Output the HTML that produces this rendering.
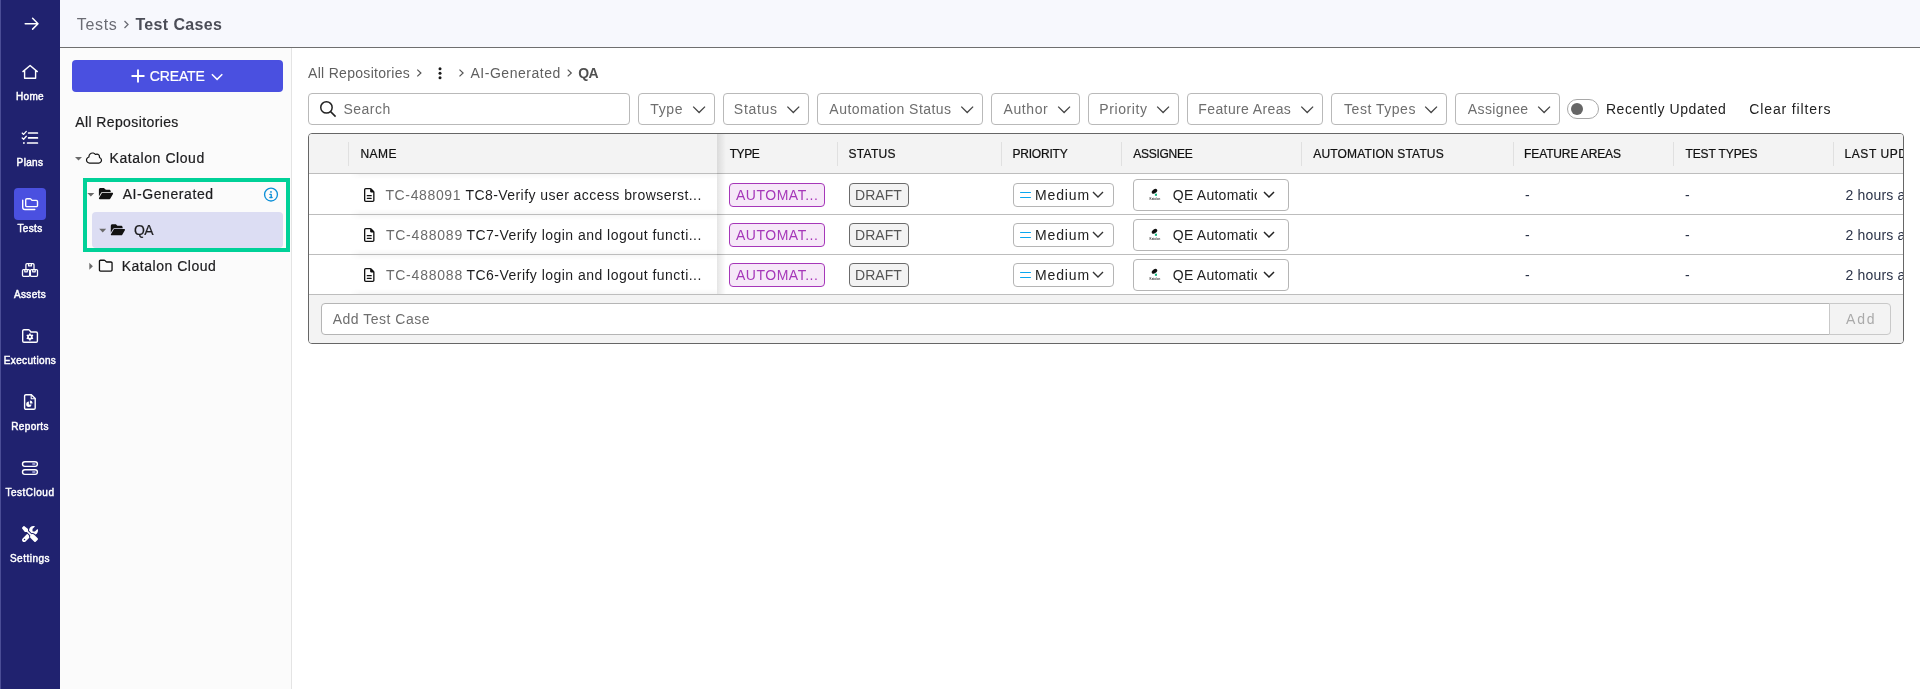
<!DOCTYPE html>
<html lang="en">
<head>
<meta charset="utf-8">
<title>Test Cases</title>
<style>
*{box-sizing:border-box;margin:0;padding:0}
html,body{width:1920px;height:689px;overflow:hidden;background:#fff}
body{font-family:"Liberation Sans",Arial,sans-serif;font-size:14px;color:#1d1d1f;position:relative;will-change:transform}
.abs{position:absolute}
.t{position:absolute;white-space:nowrap;line-height:1}
svg{position:absolute;overflow:visible}

/* sidebar */
#side{position:absolute;left:0;top:0;width:60px;height:689px;background:#20226f}
#side .stripe{position:absolute;left:0;top:0;width:1px;height:689px;background:#4b4d96}
.nav{position:absolute;left:0;width:60px;text-align:center;color:#fff;font-size:10px;font-weight:400;-webkit-text-stroke:.45px #fff;letter-spacing:.35px;line-height:1;white-space:nowrap}
#navsel{position:absolute;left:14px;top:188px;width:32px;height:32px;border-radius:4px;background:#4a50e0}

/* header */
#hdr{position:absolute;left:60px;top:0;width:1860px;height:47px;background:#f7f8fd}
#hdrline{position:absolute;left:60px;top:47px;width:1860px;height:1px;background:#6f6f6f}
#hdrshadow{position:absolute;left:60px;top:48px;width:1860px;height:2px;background:linear-gradient(#d9d9d9,#fff)}

/* tree */
#tree{position:absolute;left:60px;top:48px;width:231px;height:641px;background:#fbfbfb}
#treeline{position:absolute;left:291px;top:48px;width:1px;height:641px;background:#e4e4e4}
#create{position:absolute;left:72px;top:60px;width:211px;height:32px;border-radius:4px;background:#4a50e0}
#hl{position:absolute;left:83px;top:178px;width:207px;height:74px;border:4px solid #00d198}
#selrow{position:absolute;left:92px;top:212px;width:191px;height:36px;border-radius:4px;background:#dcddf3}

/* filters */
.fbox{position:absolute;top:93px;height:32px;border:1px solid #b9b9b9;border-radius:4px;background:#fff}
.ftxt{position:absolute;top:102px;font-size:14px;line-height:1;color:#6e6e6e;white-space:nowrap}

/* table */
#tbl{position:absolute;left:308px;top:133px;width:1596px;height:211px;border:1px solid #666;border-radius:4px;background:#fff;overflow:hidden}
.th{position:absolute;top:148px;font-size:12px;font-weight:400;line-height:1;color:#111;white-space:nowrap;letter-spacing:.2px;-webkit-text-stroke:.22px #111}
.sep{position:absolute;top:142px;width:1px;height:24px;background:#e0e0e0}
.hline{position:absolute;left:309px;width:1594px;height:1px;background:#bdbdbd}
.cell{position:absolute;font-size:14px;line-height:1;white-space:nowrap}
/*FIT*/
#h_tests{letter-spacing:0.70px !important;left:76.72px !important}
#h_tc{letter-spacing:0.37px !important;left:135.39px !important}
#c_create{letter-spacing:-0.15px !important;left:149.85px !important}
#t_allrepo{letter-spacing:0.39px !important;left:75.25px !important}
#t_kc1{letter-spacing:0.56px !important;left:109.56px !important}
#t_aigen{letter-spacing:0.57px !important;left:122.71px !important}
#t_qa{letter-spacing:-0.80px !important;left:134.10px !important}
#t_kc2{letter-spacing:0.51px !important;left:121.70px !important}
#b_all{letter-spacing:0.30px !important;left:308.03px !important}
#b_ai{letter-spacing:0.53px !important;left:470.48px !important}
#b_qa{letter-spacing:-0.61px !important;left:578.13px !important}
#f_search{letter-spacing:0.46px !important;left:343.57px !important}
#f_type{letter-spacing:0.66px !important;left:650.21px !important}
#f_status{letter-spacing:0.72px !important;left:733.83px !important}
#f_auto{letter-spacing:0.46px !important;left:829.35px !important}
#f_author{letter-spacing:0.59px !important;left:1003.48px !important}
#f_prio{letter-spacing:0.57px !important;left:1099.36px !important}
#f_fa{letter-spacing:0.38px !important;left:1198.36px !important}
#f_tt{letter-spacing:0.52px !important;left:1344.08px !important}
#f_asg{letter-spacing:0.39px !important;left:1467.78px !important}
#f_recent{letter-spacing:0.58px !important;left:1605.90px !important}
#f_clear{letter-spacing:0.86px !important;left:1749.31px !important}
#th0{letter-spacing:0.46px !important;left:360.43px !important}
#th1{letter-spacing:-0.44px !important;left:729.70px !important}
#th2{letter-spacing:0.28px !important;left:848.56px !important}
#th3{letter-spacing:-0.20px !important;left:1012.43px !important}
#th4{letter-spacing:-0.29px !important;left:1133.37px !important}
#th5{letter-spacing:0.16px !important;left:1313.37px !important}
#th6{letter-spacing:-0.14px !important;left:1524.12px !important}
#th7{letter-spacing:-0.10px !important;left:1685.44px !important}
#r0_tc{letter-spacing:0.64px !important;left:385.41px !important}
#r0_nm{letter-spacing:0.44px !important;left:465.41px !important}
#r0_au{letter-spacing:0.51px !important;left:736.03px !important}
#r0_dr{letter-spacing:-0.00px !important;left:855.12px !important}
#r0_md{letter-spacing:0.84px !important;left:1035.12px !important}
#ft_add{letter-spacing:0.49px !important;left:332.78px !important}
#ft_btn{letter-spacing:1.79px !important;left:1846.03px !important}
#r1_tc{letter-spacing:0.79px !important;left:385.88px !important}
#r1_nm{letter-spacing:0.47px !important;left:466.51px !important}
#r1_au{letter-spacing:0.51px !important;left:736.03px !important}
#r1_dr{letter-spacing:-0.00px !important;left:855.12px !important}
#r1_md{letter-spacing:0.84px !important;left:1035.12px !important}
#r2_tc{letter-spacing:0.79px !important;left:385.88px !important}
#r2_nm{letter-spacing:0.47px !important;left:466.51px !important}
#r2_au{letter-spacing:0.51px !important;left:736.03px !important}
#r2_dr{letter-spacing:-0.00px !important;left:855.12px !important}
#r2_md{letter-spacing:0.84px !important;left:1035.12px !important}
/*ENDFIT*/
#t_allrepo,#t_kc1,#t_aigen,#t_qa,#t_kc2{-webkit-text-stroke:.2px #1d1d1f}
#c_create{-webkit-text-stroke:.2px #fff}
</style>
</head>
<body>

<!-- HEADER -->
<div id="hdr"></div>
<div id="hdrline"></div>
<div class="t" id="h_tests" style="left:76px;top:17px;font-size:16px;color:#6b6c74">Tests</div>
<svg style="left:123px;top:20px" width="7" height="9" viewBox="0 0 7 9"><path d="M1.5 1 L5 4.5 L1.5 8" fill="none" stroke="#6b6c74" stroke-width="1.3"/></svg>
<div class="t" id="h_tc" style="left:135px;top:17px;font-size:16px;font-weight:700;color:#4b4d57">Test Cases</div>

<!-- TREE PANEL -->
<div id="tree"></div>
<div id="treeline"></div>
<div id="create"></div>
<div class="t" id="c_create" style="left:150px;top:69px;font-size:14px;color:#fff;letter-spacing:.3px">CREATE</div>

<div class="t" id="t_allrepo" style="left:75px;top:115px;font-size:14px;color:#1d1d1f">All Repositories</div>
<div class="t" id="t_kc1" style="left:110px;top:151px;font-size:14px">Katalon Cloud</div>
<div id="selrow"></div>
<div class="t" id="t_aigen" style="left:122px;top:187px;font-size:14px">AI-Generated</div>
<div class="t" id="t_qa" style="left:134px;top:223px;font-size:14px">QA</div>
<div class="t" id="t_kc2" style="left:122px;top:259px;font-size:14px">Katalon Cloud</div>
<div id="hl"></div>

<!-- SIDEBAR -->
<div id="side"><div class="stripe"></div></div>
<div id="navsel"></div>
<div class="nav" id="n_home" style="top:92px">Home</div>
<div class="nav" id="n_plans" style="top:158px">Plans</div>
<div class="nav" id="n_tests" style="top:224px">Tests</div>
<div class="nav" id="n_assets" style="top:290px">Assets</div>
<div class="nav" id="n_exec" style="top:356px">Executions</div>
<div class="nav" id="n_reports" style="top:422px">Reports</div>
<div class="nav" id="n_tc" style="top:488px;letter-spacing:.5px">TestCloud</div>
<div class="nav" id="n_set" style="top:554px;letter-spacing:.5px">Settings</div>

<svg id="icons" style="left:0;top:0;pointer-events:none;z-index:10" width="1920" height="689" viewBox="0 0 1920 689">
<g fill="none" stroke="#fff" stroke-width="1.4" stroke-linecap="round" stroke-linejoin="round">
<path d="M25.2 23.7 H38 M32.6 18.3 L38 23.7 L32.6 29.1" stroke-width="1.5"/>
<path d="M22.9 71.6 L30.1 65.5 L37.3 71.6 M24.6 70.4 V78.3 H35.6 V70.4"/>
<path d="M28.6 133 H37.4 M28.6 137.9 H37.4 M27.6 143 H37.4" stroke-width="1.7"/>
<path d="M22.2 133.1 L23.6 134.4 L26.3 131.4 M22.2 138 L23.6 139.3 L26.3 136.3" stroke-width="1.3"/>
<circle cx="23.9" cy="143" r="0.9" fill="#fff" stroke="none"/>
<path d="M25.7 205.4 V199.9 a1.2 1.2 0 0 1 1.2 -1.2 H30 a1.2 1.2 0 0 1 .9 .4 L32 200.4 H36.3 a1.2 1.2 0 0 1 1.2 1.2 V205.4 a1.2 1.2 0 0 1 -1.2 1.2 H26.9 a1.2 1.2 0 0 1 -1.2 -1.2 Z"/>
<path d="M22.7 200.3 V207.3 a2.2 2.2 0 0 0 2.2 2.2 H34.8"/>
<path d="M25.9 269 V264.7 a1 1 0 0 1 1 -1 H33 a1 1 0 0 1 1 1 V269 M28.6 263.7 V265.9 H31.4 V263.7" stroke-width="1.3"/>
<rect x="22.5" y="269.6" width="7.1" height="6.7" rx="1" stroke-width="1.3"/>
<rect x="30.4" y="269.6" width="7.1" height="6.7" rx="1" stroke-width="1.3"/>
<path d="M24.8 269.6 V271.8 H27.3 V269.6 M32.7 269.6 V271.8 H35.2 V269.6" stroke-width="1.2"/>
<path d="M22.7 340.9 V331 a1.3 1.3 0 0 1 1.3 -1.3 H28.4 a1.3 1.3 0 0 1 1 .45 L30.9 332 H36.1 a1.3 1.3 0 0 1 1.3 1.3 V340.9 a1.3 1.3 0 0 1 -1.3 1.3 H24 a1.3 1.3 0 0 1 -1.3 -1.3 Z"/>
<circle cx="29.9" cy="336.9" r="1.9" stroke-width="1.7"/>
<path d="M29.9 333.9 V334.5 M29.9 339.3 V339.9 M27.3 335.4 L27.8 335.7 M32 338.1 L32.5 338.4 M27.3 338.4 L27.8 338.1 M32 335.7 L32.5 335.4" stroke-width="1.5"/>
<path d="M24.6 396 a1.3 1.3 0 0 1 1.3 -1.3 H31.4 L35.2 398.5 V408 a1.3 1.3 0 0 1 -1.3 1.3 H25.9 a1.3 1.3 0 0 1 -1.3 -1.3 Z"/>
<path d="M31.2 394.9 V398.7 H35" stroke-width="1.1"/>
<path d="M28.9 401.6 A2.7 2.7 0 1 0 31.6 404.5 H28.9 Z" fill="#fff" stroke="none"/>
<path d="M29.9 400.6 A2.9 2.9 0 0 1 32.6 403.4 H29.9 Z" fill="#fff" stroke="none"/>
<rect x="22.5" y="461.7" width="14.9" height="4.7" rx="2.35"/>
<rect x="22.5" y="469.7" width="14.9" height="4.7" rx="2.35"/>
<path d="M32.3 464.05 H35.4 M32.3 472.05 H35.4" stroke="#8a8dc9" stroke-width="2.2" stroke-linecap="butt"/>
</g>
<g transform="translate(22 526) scale(0.03125)"><path d="M78.6 5C69.1-2.4 55.6-1.5 47 7L7 47c-8.500 8.500-9.400 22-2.100 31.600l80 104c4.500 5.900 11.600 9.400 19 9.400h54.100l109 109c-14.700 29-10 65.400 14.300 89.600l112 112c12.500 12.500 32.800 12.500 45.300 0l64-64c12.500-12.500 12.500-32.800 0-45.300l-112-112c-24.200-24.200-60.600-29-89.600-14.300l-109-109V104c0-7.500-3.500-14.500-9.400-19L78.600 5zM19.900 396.100C7.200 408.800 0 426.100 0 444.100C0 481.600 30.400 512 67.900 512c18 0 35.300-7.200 48-19.900L233.700 374.300c-7.800-20.900-9-43.600-3.600-65.100l-61.700-61.700L19.900 396.100zM512 144c0-10.500-1.100-20.700-3.200-30.500c-2.400-11.200-16.100-14.100-24.200-6l-63.900 63.900c-3 3-7.100 4.700-11.300 4.700H352c-8.800 0-16-7.200-16-16V102.600c0-4.200 1.700-8.300 4.700-11.300l63.900-63.900c8.100-8.100 5.200-21.800-6-24.200C388.700 1.100 378.500 0 368 0C288.500 0 224 64.500 224 144l0 .8 85.300 85.300c36-9.100 75.800 .5 104 28.700L429 274.500c49-23 83-72.800 83-130.500zM56 432a24 24 0 1 1 48 0 24 24 0 1 1 -48 0z" fill="#fff"/></g>
<path d="M75 156.9 H82 L78.5 160.5 Z" fill="#6a6a6a"/>
<path d="M87.3 192.9 H94.3 L90.8 196.5 Z" fill="#6a6a6a"/>
<path d="M99.2 228.8 H106.2 L102.7 232.4 Z" fill="#6a6a6a"/>
<path d="M89.3 262.8 V269.8 L92.9 266.3 Z" fill="#6a6a6a"/>
<g transform="translate(85.9 151.59) scale(0.02531)"><path d="M354.900 121.700c13.800 16 36.500 21.100 55.900 12.500c8.900-3.900 18.700-6.200 29.200-6.200c39.800 0 72 32.200 72 72c0 4-.3 7.900-.9 11.700c-3.500 21.600 8.100 42.900 28.100 51.700C570.400 276.900 592 308 592 344c0 46.800-36.600 85.200-82.800 87.800c-.6 0-1.300 .1-1.900 .2H504 144c-53 0-96-43-96-96c0-41.700 26.600-77.300 64-90.500c19.200-6.800 32-24.900 32-45.300l0-.2v0 0c0-66.300 53.700-120 120-120c36.300 0 68.800 16.100 90.900 41.700zM512 480v-.2c71.400-4.100 128-63.300 128-135.800c0-55.700-33.500-103.700-81.500-124.700c1-6.300 1.500-12.800 1.500-19.300c0-66.300-53.700-120-120-120c-17.400 0-33.800 3.700-48.700 10.300C360.400 52.600 314.900 32 264 32C171.200 32 96 107.200 96 200l0 .2C40.100 220 0 273.300 0 336c0 79.500 64.500 144 144 144H464h40 8z" fill="#151515"/></g>
<g transform="translate(98.9 187.31) scale(0.02465)"><path d="M88.7 223.8L0 375.800V96C0 60.700 28.700 32 64 32H181.500c17 0 33.300 6.700 45.300 18.700l26.500 26.500c12 12 28.300 18.700 45.300 18.700H416c35.300 0 64 28.700 64 64v32H144c-22.800 0-43.800 12.100-55.300 31.800zm27.600 16.100C122.100 230 132.600 224 144 224H544c11.500 0 22 6.100 27.700 16.100s5.700 22.200-.1 32.100l-112 192C453.900 474 443.400 480 432 480H32c-11.500 0-22-6.100-27.700-16.100s-5.700-22.200 .1-32.100l112-192z" fill="#111"/></g>
<g transform="translate(110.8 223.51) scale(0.02465)"><path d="M88.7 223.8L0 375.800V96C0 60.700 28.700 32 64 32H181.500c17 0 33.300 6.700 45.300 18.700l26.500 26.500c12 12 28.300 18.700 45.300 18.700H416c35.300 0 64 28.700 64 64v32H144c-22.800 0-43.800 12.100-55.300 31.800zm27.600 16.100C122.100 230 132.600 224 144 224H544c11.500 0 22 6.100 27.700 16.100s5.700 22.200-.1 32.100l-112 192C453.900 474 443.400 480 432 480H32c-11.500 0-22-6.100-27.700-16.100s-5.700-22.200 .1-32.100l112-192z" fill="#111"/></g>
<g transform="translate(98.8 258.73) scale(0.02715)"><path d="M0 96C0 60.700 28.700 32 64 32H196.100c19.100 0 37.400 7.600 50.900 21.100L289.900 96H448c35.300 0 64 28.700 64 64V416c0 35.300-28.700 64-64 64H64c-35.300 0-64-28.700-64-64V96zM64 80c-8.800 0-16 7.200-16 16V416c0 8.800 7.200 16 16 16H448c8.800 0 16-7.200 16-16V160c0-8.800-7.200-16-16-16H286.600c-10.600 0-20.800-4.200-28.300-11.700L213.100 87c-4.500-4.500-10.600-7-17-7H64z" fill="#111"/></g>
<g transform="translate(263.9 187.5) scale(0.02773)"><path d="M256 48a208 208 0 1 1 0 416 208 208 0 1 1 0-416zm0 464A256 256 0 1 0 256 0a256 256 0 1 0 0 512zM216 336c-13.300 0-24 10.700-24 24s10.700 24 24 24h80c13.300 0 24-10.700 24-24s-10.700-24-24-24h-8V248c0-13.300-10.700-24-24-24H216c-13.300 0-24 10.700-24 24s10.700 24 24 24h24v64H216zm40-144a32 32 0 1 0 0-64 32 32 0 1 0 0 64z" fill="#0b8fd7"/></g>
<path d="M131.5 76 H144.5 M138 69.5 V82.5" stroke="#fff" stroke-width="1.9" fill="none"/>
<path d="M211.9 74.2 L217.1 79.4 L222.3 74.2" stroke="#fff" stroke-width="1.5" fill="none"/>
<path d="M417.3 69.6 L420.90000000000003 73 L417.3 76.4" stroke="#555" stroke-width="1.2" fill="none"/>
<path d="M459.5 69.6 L463.1 73 L459.5 76.4" stroke="#555" stroke-width="1.2" fill="none"/>
<path d="M567.7 69.6 L571.3000000000001 73 L567.7 76.4" stroke="#555" stroke-width="1.2" fill="none"/>
<circle cx="440" cy="68.8" r="1.5" fill="#1a1a1a"/>
<circle cx="440" cy="73.3" r="1.5" fill="#1a1a1a"/>
<circle cx="440" cy="77.8" r="1.5" fill="#1a1a1a"/>
<circle cx="326.45" cy="107.4" r="5.7" stroke="#222" stroke-width="1.5" fill="none"/><path d="M330.6 111.6 L335.6 116.6" stroke="#222" stroke-width="1.5" fill="none"/>
<path d="M693.2 106.6 L699.1 112.5 L705.0 106.6" stroke="#444" stroke-width="1.3" fill="none"/>
<path d="M787.4 106.6 L793.3 112.5 L799.1999999999999 106.6" stroke="#444" stroke-width="1.3" fill="none"/>
<path d="M961.3 106.6 L967.1999999999999 112.5 L973.0999999999999 106.6" stroke="#444" stroke-width="1.3" fill="none"/>
<path d="M1058.2 106.6 L1064.1000000000001 112.5 L1070.0 106.6" stroke="#444" stroke-width="1.3" fill="none"/>
<path d="M1157.2 106.6 L1163.1000000000001 112.5 L1169.0 106.6" stroke="#444" stroke-width="1.3" fill="none"/>
<path d="M1301.3 106.6 L1307.2 112.5 L1313.1 106.6" stroke="#444" stroke-width="1.3" fill="none"/>
<path d="M1425.2 106.6 L1431.1000000000001 112.5 L1437.0 106.6" stroke="#444" stroke-width="1.3" fill="none"/>
<path d="M1538.2 106.6 L1544.1000000000001 112.5 L1550.0 106.6" stroke="#444" stroke-width="1.3" fill="none"/>
<ellipse cx="1154.5" cy="191.3" rx="3.1" ry="1.9" transform="rotate(-38 1154.5 191.3)" fill="#111"/>
<rect x="1154.9" y="193.7" width="2.1" height="2.1" fill="#16b77f"/>
<text x="1154.9" y="200.1" font-size="2.9" text-anchor="middle" fill="#444" font-family="Liberation Sans, sans-serif" font-weight="700">Katalon</text>
<ellipse cx="1154.5" cy="231.3" rx="3.1" ry="1.9" transform="rotate(-38 1154.5 231.3)" fill="#111"/>
<rect x="1154.9" y="233.7" width="2.1" height="2.1" fill="#16b77f"/>
<text x="1154.9" y="240.1" font-size="2.9" text-anchor="middle" fill="#444" font-family="Liberation Sans, sans-serif" font-weight="700">Katalon</text>
<ellipse cx="1154.5" cy="271.3" rx="3.1" ry="1.9" transform="rotate(-38 1154.5 271.3)" fill="#111"/>
<rect x="1154.9" y="273.7" width="2.1" height="2.1" fill="#16b77f"/>
<text x="1154.9" y="280.1" font-size="2.9" text-anchor="middle" fill="#444" font-family="Liberation Sans, sans-serif" font-weight="700">Katalon</text>
</svg>
<!-- BREADCRUMB -->
<div class="t" id="b_all" style="left:308px;top:66px;font-size:14px;color:#5f5f5f">All Repositories</div>
<div class="t" id="b_ai" style="left:471px;top:66px;font-size:14px;color:#5f5f5f">AI-Generated</div>
<div class="t" id="b_qa" style="left:579px;top:66px;font-size:14px;font-weight:700;color:#505050">QA</div>

<!-- FILTERS -->
<div class="fbox" style="left:308px;width:322px"></div>
<div class="ftxt" id="f_search" style="left:344px">Search</div>
<div class="fbox" style="left:638px;width:77px"></div><div class="ftxt" id="f_type" style="left:650px">Type</div>
<div class="fbox" style="left:723px;width:86px"></div><div class="ftxt" id="f_status" style="left:735px">Status</div>
<div class="fbox" style="left:817px;width:166px"></div><div class="ftxt" id="f_auto" style="left:829px">Automation Status</div>
<div class="fbox" style="left:991px;width:89px"></div><div class="ftxt" id="f_author" style="left:1003px">Author</div>
<div class="fbox" style="left:1088px;width:91px"></div><div class="ftxt" id="f_prio" style="left:1100px">Priority</div>
<div class="fbox" style="left:1187px;width:136px"></div><div class="ftxt" id="f_fa" style="left:1199px">Feature Areas</div>
<div class="fbox" style="left:1331px;width:116px"></div><div class="ftxt" id="f_tt" style="left:1343px">Test Types</div>
<div class="fbox" style="left:1455px;width:105px"></div><div class="ftxt" id="f_asg" style="left:1467px">Assignee</div>
<div class="abs" style="left:1567px;top:99px;width:32px;height:20px;border:1px solid #a8a8a8;border-radius:10px;background:#fff"></div>
<div class="abs" style="left:1571px;top:103px;width:12px;height:12px;border-radius:6px;background:#666"></div>
<div class="ftxt" id="f_recent" style="left:1607px;color:#222">Recently Updated</div>
<div class="ftxt" id="f_clear" style="left:1750px;color:#222">Clear filters</div>

<!-- TABLE -->
<div id="tbl"></div>
<div class="abs" style="left:309px;top:134px;width:1594px;height:39px;background:#f3f3f3;border-radius:3px 3px 0 0"></div>
<div class="abs" style="left:309px;top:295px;width:1594px;height:48px;background:#f3f3f3;border-radius:0 0 3px 3px"></div>
<div class="hline" style="top:173px"></div>
<div class="hline" style="top:214px"></div>
<div class="hline" style="top:254px"></div>
<div class="hline" style="top:294px"></div>
<div class="abs" style="left:717px;top:134px;width:9px;height:160px;background:linear-gradient(90deg,rgba(0,0,0,.10),rgba(0,0,0,0))"></div>
<div class="abs" style="left:350px;top:174px;width:367px;height:5px;background:linear-gradient(rgba(0,0,0,.035),rgba(0,0,0,0));-webkit-mask-image:linear-gradient(90deg,transparent,#000 10px)"></div>
<div class="abs" style="left:350px;top:209px;width:367px;height:5px;background:linear-gradient(rgba(0,0,0,0),rgba(0,0,0,.035));-webkit-mask-image:linear-gradient(90deg,transparent,#000 10px)"></div>
<div class="abs" style="left:350px;top:215px;width:367px;height:5px;background:linear-gradient(rgba(0,0,0,.035),rgba(0,0,0,0));-webkit-mask-image:linear-gradient(90deg,transparent,#000 10px)"></div>
<div class="abs" style="left:350px;top:249px;width:367px;height:5px;background:linear-gradient(rgba(0,0,0,0),rgba(0,0,0,.035));-webkit-mask-image:linear-gradient(90deg,transparent,#000 10px)"></div>
<div class="abs" style="left:350px;top:255px;width:367px;height:5px;background:linear-gradient(rgba(0,0,0,.035),rgba(0,0,0,0));-webkit-mask-image:linear-gradient(90deg,transparent,#000 10px)"></div>
<div class="abs" style="left:350px;top:289px;width:367px;height:5px;background:linear-gradient(rgba(0,0,0,0),rgba(0,0,0,.035));-webkit-mask-image:linear-gradient(90deg,transparent,#000 10px)"></div>
<div class="sep" style="left:348px"></div>
<div class="sep" style="left:837px"></div>
<div class="sep" style="left:1001px"></div>
<div class="sep" style="left:1121px"></div>
<div class="sep" style="left:1301px"></div>
<div class="sep" style="left:1513px"></div>
<div class="sep" style="left:1673px"></div>
<div class="sep" style="left:1833px"></div>
<div class="th" id="th0" style="left:361px">NAME</div>
<div class="th" id="th1" style="left:729px">TYPE</div>
<div class="th" id="th2" style="left:849px">STATUS</div>
<div class="th" id="th3" style="left:1013px">PRIORITY</div>
<div class="th" id="th4" style="left:1133px">ASSIGNEE</div>
<div class="th" id="th5" style="left:1313px">AUTOMATION STATUS</div>
<div class="th" id="th6" style="left:1525px">FEATURE AREAS</div>
<div class="th" id="th7" style="left:1685px">TEST TYPES</div>
<div class="abs" style="left:1834px;top:134px;width:69px;height:39px;overflow:hidden"><div class="th" id="th8" style="left:10.6px;top:14px;letter-spacing:.55px">LAST UPDATED</div></div>
<svg style="left:364px;top:188.0px" width="10.5" height="14" viewBox="0 0 384 512"><path d="M64 464c-8.800 0-16-7.200-16-16V64c0-8.800 7.200-16 16-16h160v80c0 17.700 14.300 32 32 32h80v288c0 8.800-7.200 16-16 16H64zM64 0C28.700 0 0 28.700 0 64v384c0 35.300 28.700 64 64 64h256c35.300 0 64-28.700 64-64V154.500c0-17-6.700-33.300-18.700-45.300L274.700 18.700C262.700 6.700 246.500 0 229.500 0H64zm56 256c-13.300 0-24 10.700-24 24s10.700 24 24 24h144c13.300 0 24-10.700 24-24s-10.700-24-24-24H120zm0 96c-13.300 0-24 10.700-24 24s10.700 24 24 24h144c13.300 0 24-10.700 24-24s-10.700-24-24-24H120z" fill="#111"/></svg>
<div class="cell" id="r0_tc" style="left:385px;top:187.5px;color:#6a6a6a">TC-488091</div>
<div class="cell" id="r0_nm" style="left:465px;top:187.5px;color:#1d1d1f">TC8-Verify user access browserst...</div>
<div class="abs" style="left:729px;top:183.0px;width:96px;height:24px;border:1px solid #a637b9;border-radius:4px;background:#f6e8f8"></div>
<div class="cell" id="r0_au" style="left:736px;top:187.5px;color:#a637b9">AUTOMAT...</div>
<div class="abs" style="left:849px;top:183.0px;width:60px;height:24px;border:1px solid #6b6b6b;border-radius:4px;background:#f3f3f3"></div>
<div class="cell" id="r0_dr" style="left:856px;top:187.5px;color:#555">DRAFT</div>
<div class="abs" style="left:1013px;top:183.0px;width:101px;height:24px;border:1px solid #b5b5b5;border-radius:4px;background:#fff"></div>
<div class="abs" style="left:1020px;top:192px;width:11px;height:1px;background:#0aa7ef;border-radius:1px"></div>
<div class="abs" style="left:1020px;top:197px;width:11px;height:1px;background:#0aa7ef;border-radius:1px"></div>
<div class="cell" id="r0_md" style="left:1036px;top:187.5px;color:#222">Medium</div>
<svg style="left:1092px;top:191.0px" width="12" height="7" viewBox="0 0 12 7"><path d="M1 1 L6 6 L11 1" fill="none" stroke="#333" stroke-width="1.4"/></svg>
<div class="abs" style="left:1133px;top:179.0px;width:156px;height:32px;border:1px solid #b5b5b5;border-radius:4px;background:#fff"></div>
<div class="abs" style="left:1172px;top:184.5px;width:85px;height:20px;overflow:hidden"><div class="cell" id="r0_qe" style="left:.75px;top:3px;letter-spacing:.25px;color:#222">QE Automation</div></div>
<svg style="left:1263px;top:191.0px" width="12" height="7" viewBox="0 0 12 7"><path d="M1 1 L6 6 L11 1" fill="none" stroke="#222" stroke-width="1.5"/></svg>
<div class="cell" style="left:1525px;top:187.5px;color:#2b3348">-</div>
<div class="cell" style="left:1685px;top:187.5px;color:#2b3348">-</div>
<div class="abs" style="left:1834px;top:184.5px;width:69px;height:20px;overflow:hidden"><div class="cell" id="r0_ago" style="left:11.5px;top:3px;letter-spacing:.18px;color:#2b3348">2 hours ago</div></div>
<svg style="left:364px;top:228.0px" width="10.5" height="14" viewBox="0 0 384 512"><path d="M64 464c-8.800 0-16-7.200-16-16V64c0-8.800 7.200-16 16-16h160v80c0 17.700 14.300 32 32 32h80v288c0 8.800-7.200 16-16 16H64zM64 0C28.700 0 0 28.700 0 64v384c0 35.300 28.700 64 64 64h256c35.300 0 64-28.700 64-64V154.500c0-17-6.700-33.300-18.700-45.300L274.700 18.700C262.700 6.700 246.500 0 229.500 0H64zm56 256c-13.300 0-24 10.700-24 24s10.700 24 24 24h144c13.300 0 24-10.700 24-24s-10.700-24-24-24H120zm0 96c-13.300 0-24 10.700-24 24s10.700 24 24 24h144c13.300 0 24-10.700 24-24s-10.700-24-24-24H120z" fill="#111"/></svg>
<div class="cell" id="r1_tc" style="left:385px;top:227.5px;color:#6a6a6a">TC-488089</div>
<div class="cell" id="r1_nm" style="left:465px;top:227.5px;color:#1d1d1f">TC7-Verify login and logout functi...</div>
<div class="abs" style="left:729px;top:223.0px;width:96px;height:24px;border:1px solid #a637b9;border-radius:4px;background:#f6e8f8"></div>
<div class="cell" id="r1_au" style="left:736px;top:227.5px;color:#a637b9">AUTOMAT...</div>
<div class="abs" style="left:849px;top:223.0px;width:60px;height:24px;border:1px solid #6b6b6b;border-radius:4px;background:#f3f3f3"></div>
<div class="cell" id="r1_dr" style="left:856px;top:227.5px;color:#555">DRAFT</div>
<div class="abs" style="left:1013px;top:223.0px;width:101px;height:24px;border:1px solid #b5b5b5;border-radius:4px;background:#fff"></div>
<div class="abs" style="left:1020px;top:232px;width:11px;height:1px;background:#0aa7ef;border-radius:1px"></div>
<div class="abs" style="left:1020px;top:237px;width:11px;height:1px;background:#0aa7ef;border-radius:1px"></div>
<div class="cell" id="r1_md" style="left:1036px;top:227.5px;color:#222">Medium</div>
<svg style="left:1092px;top:231.0px" width="12" height="7" viewBox="0 0 12 7"><path d="M1 1 L6 6 L11 1" fill="none" stroke="#333" stroke-width="1.4"/></svg>
<div class="abs" style="left:1133px;top:219.0px;width:156px;height:32px;border:1px solid #b5b5b5;border-radius:4px;background:#fff"></div>
<div class="abs" style="left:1172px;top:224.5px;width:85px;height:20px;overflow:hidden"><div class="cell" id="r1_qe" style="left:.75px;top:3px;letter-spacing:.25px;color:#222">QE Automation</div></div>
<svg style="left:1263px;top:231.0px" width="12" height="7" viewBox="0 0 12 7"><path d="M1 1 L6 6 L11 1" fill="none" stroke="#222" stroke-width="1.5"/></svg>
<div class="cell" style="left:1525px;top:227.5px;color:#2b3348">-</div>
<div class="cell" style="left:1685px;top:227.5px;color:#2b3348">-</div>
<div class="abs" style="left:1834px;top:224.5px;width:69px;height:20px;overflow:hidden"><div class="cell" id="r1_ago" style="left:11.5px;top:3px;letter-spacing:.18px;color:#2b3348">2 hours ago</div></div>
<svg style="left:364px;top:268.0px" width="10.5" height="14" viewBox="0 0 384 512"><path d="M64 464c-8.800 0-16-7.200-16-16V64c0-8.800 7.200-16 16-16h160v80c0 17.700 14.300 32 32 32h80v288c0 8.800-7.200 16-16 16H64zM64 0C28.700 0 0 28.700 0 64v384c0 35.300 28.700 64 64 64h256c35.300 0 64-28.700 64-64V154.500c0-17-6.700-33.300-18.700-45.300L274.700 18.700C262.700 6.700 246.500 0 229.500 0H64zm56 256c-13.300 0-24 10.700-24 24s10.700 24 24 24h144c13.300 0 24-10.700 24-24s-10.700-24-24-24H120zm0 96c-13.300 0-24 10.700-24 24s10.700 24 24 24h144c13.300 0 24-10.700 24-24s-10.700-24-24-24H120z" fill="#111"/></svg>
<div class="cell" id="r2_tc" style="left:385px;top:267.5px;color:#6a6a6a">TC-488088</div>
<div class="cell" id="r2_nm" style="left:465px;top:267.5px;color:#1d1d1f">TC6-Verify login and logout functi...</div>
<div class="abs" style="left:729px;top:263.0px;width:96px;height:24px;border:1px solid #a637b9;border-radius:4px;background:#f6e8f8"></div>
<div class="cell" id="r2_au" style="left:736px;top:267.5px;color:#a637b9">AUTOMAT...</div>
<div class="abs" style="left:849px;top:263.0px;width:60px;height:24px;border:1px solid #6b6b6b;border-radius:4px;background:#f3f3f3"></div>
<div class="cell" id="r2_dr" style="left:856px;top:267.5px;color:#555">DRAFT</div>
<div class="abs" style="left:1013px;top:263.0px;width:101px;height:24px;border:1px solid #b5b5b5;border-radius:4px;background:#fff"></div>
<div class="abs" style="left:1020px;top:272px;width:11px;height:1px;background:#0aa7ef;border-radius:1px"></div>
<div class="abs" style="left:1020px;top:277px;width:11px;height:1px;background:#0aa7ef;border-radius:1px"></div>
<div class="cell" id="r2_md" style="left:1036px;top:267.5px;color:#222">Medium</div>
<svg style="left:1092px;top:271.0px" width="12" height="7" viewBox="0 0 12 7"><path d="M1 1 L6 6 L11 1" fill="none" stroke="#333" stroke-width="1.4"/></svg>
<div class="abs" style="left:1133px;top:259.0px;width:156px;height:32px;border:1px solid #b5b5b5;border-radius:4px;background:#fff"></div>
<div class="abs" style="left:1172px;top:264.5px;width:85px;height:20px;overflow:hidden"><div class="cell" id="r2_qe" style="left:.75px;top:3px;letter-spacing:.25px;color:#222">QE Automation</div></div>
<svg style="left:1263px;top:271.0px" width="12" height="7" viewBox="0 0 12 7"><path d="M1 1 L6 6 L11 1" fill="none" stroke="#222" stroke-width="1.5"/></svg>
<div class="cell" style="left:1525px;top:267.5px;color:#2b3348">-</div>
<div class="cell" style="left:1685px;top:267.5px;color:#2b3348">-</div>
<div class="abs" style="left:1834px;top:264.5px;width:69px;height:20px;overflow:hidden"><div class="cell" id="r2_ago" style="left:11.5px;top:3px;letter-spacing:.18px;color:#2b3348">2 hours ago</div></div>
<div class="abs" style="left:321px;top:303px;width:1509px;height:32px;border:1px solid #b5b5b5;border-radius:4px 0 0 4px;background:#fff"></div>
<div class="abs" style="left:1829px;top:303px;width:62px;height:32px;border:1px solid #c9c9c9;border-radius:0 4px 4px 0;background:#f3f3f3"></div>
<div class="cell" id="ft_add" style="left:333px;top:312px;color:#6e6e6e">Add Test Case</div>
<div class="cell" id="ft_btn" style="left:1846px;top:312px;color:#aaa">Add</div>

</body>
</html>
